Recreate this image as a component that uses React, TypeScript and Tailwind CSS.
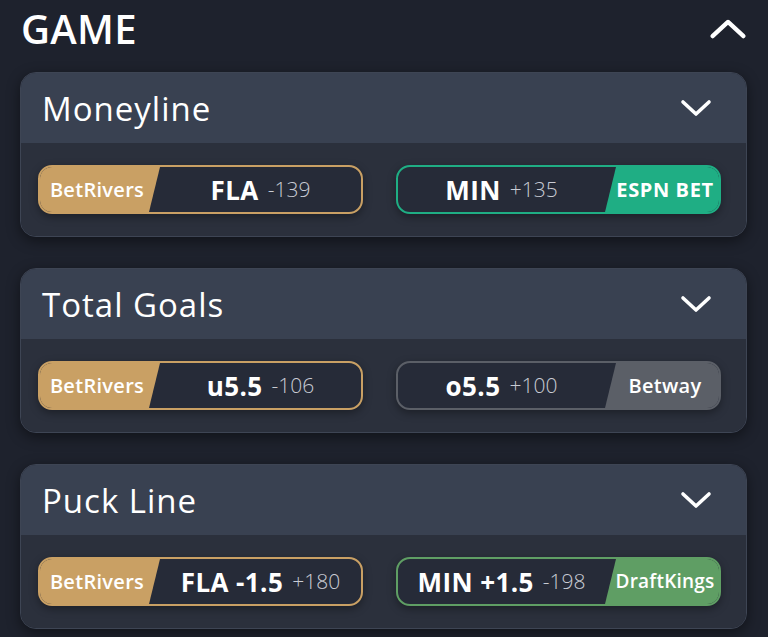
import React from "react"

type Side = {
  book: string
  color: string
  label: string
  odds: string
  bookClass?: string
}

type Market = {
  title: string
  left: Side
  right: Side
}

const markets: Market[] = [
  {
    title: "Moneyline",
    left: { book: "BetRivers", color: "gold", label: "FLA", odds: "-139" },
    right: { book: "ESPN BET", color: "teal", label: "MIN", odds: "+135", bookClass: "text-[20px] font-bold tracking-[0.6px]" },
  },
  {
    title: "Total Goals",
    left: { book: "BetRivers", color: "gold", label: "u5.5", odds: "-106" },
    right: { book: "Betway", color: "gray", label: "o5.5", odds: "+100" },
  },
  {
    title: "Puck Line",
    left: { book: "BetRivers", color: "gold", label: "FLA -1.5", odds: "+180" },
    right: { book: "DraftKings", color: "green", label: "MIN +1.5", odds: "-198", bookClass: "text-[19px] font-semibold tracking-[0.2px]" },
  },
]

const borderFor: Record<string, string> = {
  gold: "border-[#c9a064]",
  teal: "border-[#1fae84]",
  gray: "border-[#5b5f67]",
  green: "border-[#5f9e64]",
}

const bgFor: Record<string, string> = {
  gold: "bg-[#c9a064]",
  teal: "bg-[#1fae84]",
  gray: "bg-[#5b5f67]",
  green: "bg-[#5f9e64]",
}

function Chevron({ up, className }: { up?: boolean; className: string }) {
  return (
    <svg viewBox="0 0 32 18" className={className} fill="none">
      <path
        d={up ? "M3 15 L16 3 L29 15" : "M3 3 L16 15 L29 3"}
        stroke="white"
        strokeWidth="3.6"
        strokeLinecap="round"
        strokeLinejoin="round"
      />
    </svg>
  )
}

function Pick({ side, align }: { side: Side; align: "left" | "right" }) {
  const tag = (
    <div
      className={`${bgFor[side.color]} h-full flex items-center justify-center text-white ${side.bookClass ?? "text-[20px] font-semibold tracking-[0.3px]"} ${
        align === "left"
          ? "w-[120px] pr-[6px] [clip-path:polygon(0_0,100%_0,calc(100%-11px)_100%,0_100%)]"
          : "w-[114px] pl-[6px] [clip-path:polygon(11px_0,100%_0,100%_100%,0_100%)]"
      }`}
    >
      {side.book}
    </div>
  )
  return (
    <div
      className={`flex h-[49px] rounded-[14px] border-2 ${borderFor[side.color]} bg-[#262b38] overflow-hidden shadow-[0_3px_8px_rgba(0,0,0,0.35)]`}
    >
      {align === "left" && tag}
      <div className="flex-1 flex items-center justify-center gap-[9px]">
        <span className="text-white font-bold text-[26px] tracking-[0.4px] leading-none">{side.label}</span>
        <span className="text-[#c9ccd4] text-[21px] font-light leading-none">{side.odds}</span>
      </div>
      {align === "right" && tag}
    </div>
  )
}

export default function App() {
  return (
    <div className="w-[768px] h-[637px] bg-[#1e222d] overflow-hidden font-['Open_Sans',sans-serif]">
      {/* section title */}
      <div className="flex items-center justify-between h-[58px] pl-[21px] pr-[21px]">
        <h1 className="text-white text-[40px] font-semibold tracking-[0.3px] leading-none">GAME</h1>
        <Chevron up className="w-[38px] h-[22px]" />
      </div>

      <div className="mt-[14px] flex flex-col gap-[31px] pl-[20px] pr-[21px]">
        {markets.map((m) => (
          <div
            key={m.title}
            className="rounded-[16px] overflow-hidden border border-[#3e4554] shadow-[0_4px_14px_rgba(0,0,0,0.45)]"
          >
            <div className="h-[70px] bg-[#394151] flex items-center justify-between pl-[21px] pr-[34px]">
              <span className="text-white text-[33px] font-medium tracking-[1px] leading-none">{m.title}</span>
              <Chevron className="w-[32px] h-[18px]" />
            </div>
            <div className="h-[93px] bg-[#2b303c] grid grid-cols-2 gap-[33px] pl-[17px] pr-[25px] pt-[22px]">
              <Pick side={m.left} align="left" />
              <Pick side={m.right} align="right" />
            </div>
          </div>
        ))}
      </div>
    </div>
  )
}
